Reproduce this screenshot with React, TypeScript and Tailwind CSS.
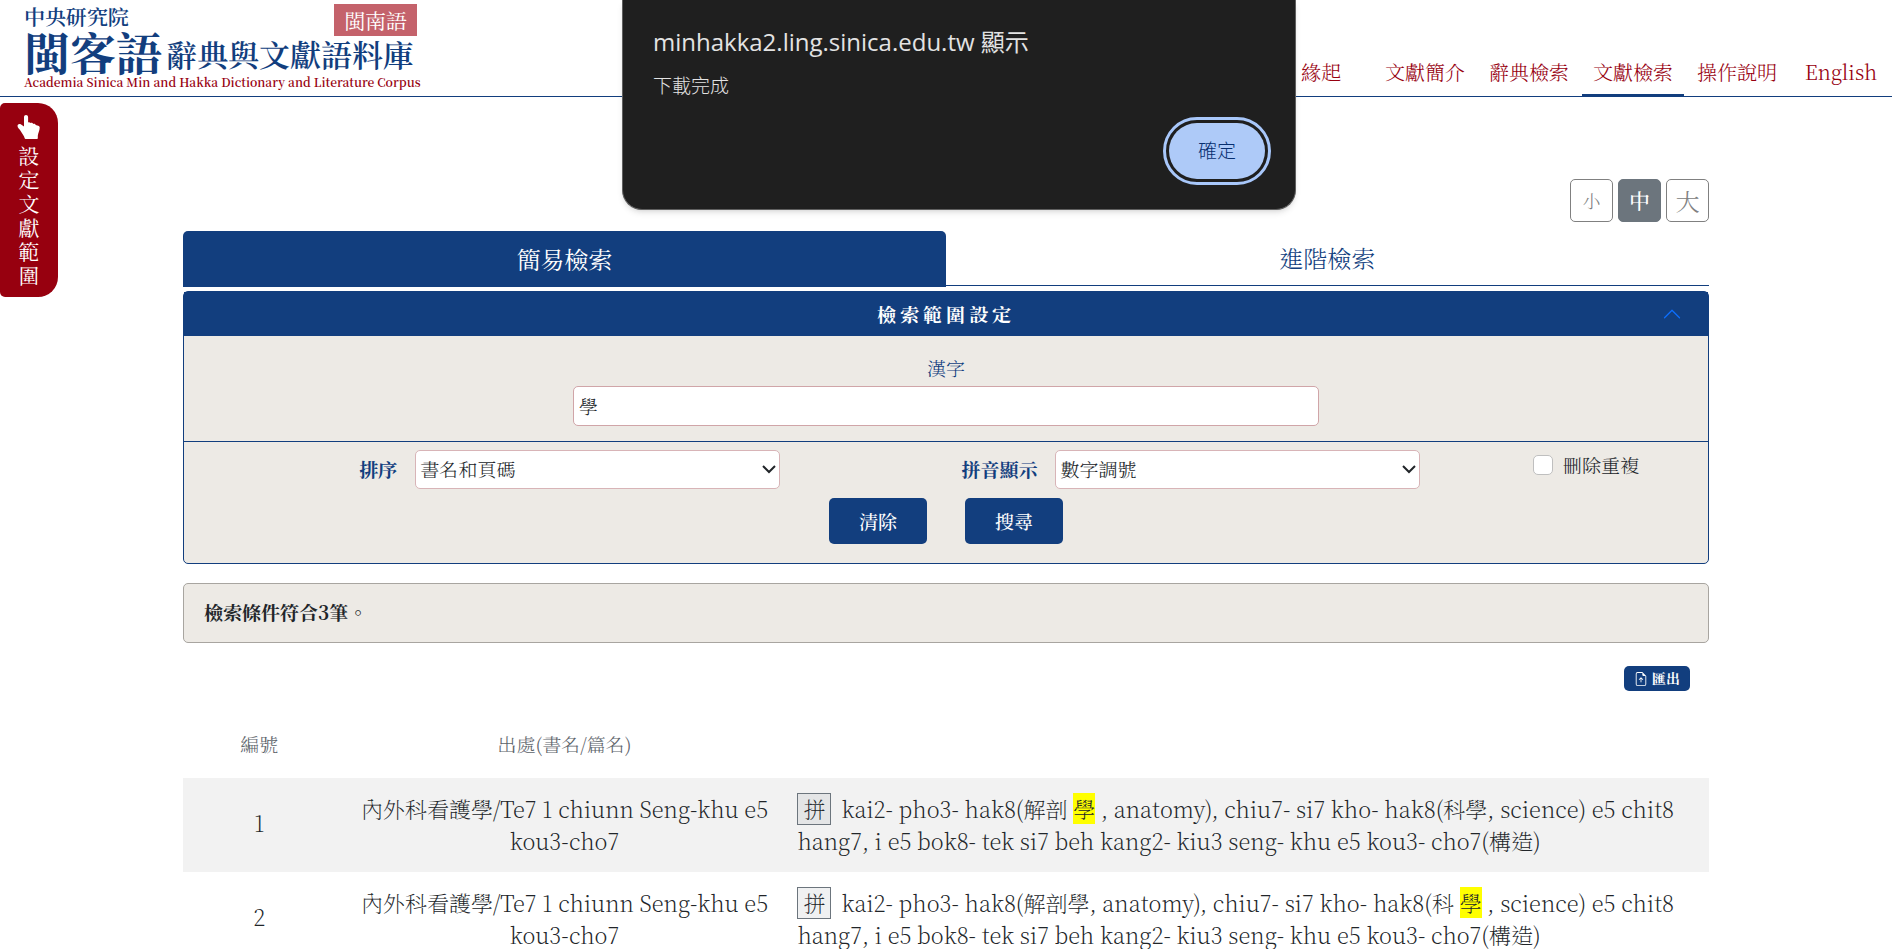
import type { ReactNode } from 'react';

type NavItem = { label: string; active?: boolean };
type Result = { id: number; source: string; text: ReactNode };

const NAV: NavItem[] = [
  { label: '緣起' },
  { label: '文獻簡介' },
  { label: '辭典檢索' },
  { label: '文獻檢索', active: true },
  { label: '操作說明' },
  { label: 'English' },
];

const SOURCE = '內外科看護學/Te7 1 chiunn Seng-khu e5 kou3-cho7';

const Hit = <mark className="bg-[#ffff00] text-inherit">學</mark>;

const RESULTS: Result[] = [
  {
    id: 1,
    source: SOURCE,
    text: (
      <>
        kai2- pho3- hak8(解剖 {Hit} , anatomy), chiu7- si7 kho- hak8(科學, science) e5 chit8 hang7, i e5
        bok8- tek si7 beh kang2- kiu3 seng- khu e5 kou3- cho7(構造)
      </>
    ),
  },
  {
    id: 2,
    source: SOURCE,
    text: (
      <>
        kai2- pho3- hak8(解剖學, anatomy), chiu7- si7 kho- hak8(科 {Hit} , science) e5 chit8 hang7, i e5
        bok8- tek si7 beh kang2- kiu3 seng- khu e5 kou3- cho7(構造)
      </>
    ),
  },
];

const HandIcon = (
  <svg width="24" height="24" viewBox="0 0 24 24" fill="currentColor" aria-hidden="true">
    <path d="M7 2.2C7 .9 7.900 0 9 0s2.100.9 2.100 2.200v5.300c.5-.4 1.900-.4 2.400.6.8-.5 2.300-.2 2.700.9 1-.4 2.300.1 2.500 1.100l2.500.6c1 .3 1.500.9 1.500 1.900 0 3.400-1.600 5.200-1.900 8.200V23c0 .6-.4 1-1 1H8.700c-.6 0-1-.4-1.100-1-.2-1.800-2.600-4.400-4.100-7.200C2.600 14 .5 12.500.5 10.900c0-1.700 1.800-2.600 3.200-1.600L7 11.400z" />
  </svg>
);

const ChevronUp = (
  <svg width="20" height="20" viewBox="0 0 16 16" fill="#0d6efd" aria-hidden="true">
    <path
      fillRule="evenodd"
      d="M7.646 4.646a.5.5 0 0 1 .708 0l6 6a.5.5 0 0 1-.708.708L8 5.707l-5.646 5.647a.5.5 0 0 1-.708-.708l6-6z"
    />
  </svg>
);

const ChevronDown = (
  <svg
    className="pointer-events-none absolute right-1 top-3"
    width="14"
    height="14"
    viewBox="0 0 14 14"
    fill="none"
    stroke="#212529"
    strokeWidth="2"
    aria-hidden="true"
  >
    <polyline points="1 4 7 10 13 4" />
  </svg>
);

const ExportIcon = (
  <svg width="14" height="14" viewBox="0 0 16 16" fill="currentColor" aria-hidden="true">
    <path d="M8.500 11.500a.5.500 0 0 1-1 0V7.707L6.354 8.854a.5.500 0 1 1-.708-.708l2-2a.5.500 0 0 1 .708 0l2 2a.5.500 0 0 1-.708.708L8.500 7.707V11.500z" />
    <path d="M14 14V4.500L9.500 0H4a2 2 0 0 0-2 2v12a2 2 0 0 0 2 2h8a2 2 0 0 0 2-2zM9.500 3A1.500 1.500 0 0 0 11 4.500h2V14a1 1 0 0 1-1 1H4a1 1 0 0 1-1-1V2a1 1 0 0 1 1-1h5.500v2z" />
  </svg>
);

function Header() {
  return (
    <header className="flex h-[97px] items-end justify-between border-b border-[#123e7e]">
      <a href="#home" className="relative flex h-full flex-col pl-6 text-[#123e7e]">
        <span className="mt-1 text-[21px] font-semibold leading-6">中央研究院</span>
        <span className="flex items-end whitespace-nowrap">
          <span className="text-[46px] font-bold leading-[46px]">閩客語</span>
          <span className="ml-1 text-[31px] font-semibold leading-10">辭典與文獻語料庫</span>
        </span>
        <span className="whitespace-nowrap text-[12px] font-semibold leading-4 text-[#97000f]">
          Academia Sinica Min and Hakka Dictionary and Literature Corpus
        </span>
        <span className="absolute left-[334px] top-1 whitespace-nowrap bg-[#c4626b] px-2.5 text-[21px] font-normal leading-8 text-white">
          閩南語
        </span>
      </a>
      <nav className="flex gap-0.5">
        {NAV.map((item) => (
          <a
            key={item.label}
            href="#nav"
            className={
              item.active
                ? 'w-[102px] border-b-2 border-[#123e7e] pb-1.5 text-center text-[20px] leading-8 text-[#97000f]'
                : 'w-[102px] border-b-2 border-transparent pb-1.5 text-center text-[20px] leading-8 text-[#97000f]'
            }
          >
            {item.label}
          </a>
        ))}
      </nav>
    </header>
  );
}

function AlertDialog() {
  return (
    <div
      role="alertdialog"
      aria-labelledby="alert-title"
      className="absolute left-1/2 top-0 flex w-[674px] -translate-x-[324px] flex-col rounded-b-[20px] border border-t-0 border-[#5f5f5f] bg-[#1f1f1f] px-[30px] pb-[30px] pt-6 font-['Open_Sans','Noto_Sans_CJK_TC',sans-serif] text-[#e3e3e3] shadow-md"
    >
      <h2 id="alert-title" className="text-[24px] font-normal leading-9">
        minhakka2.ling.sinica.edu.tw 顯示
      </h2>
      <p className="mt-3 text-[19px] leading-7">下載完成</p>
      <button
        type="button"
        className="mt-[23px] h-14 self-end rounded-[28px] bg-[#aecaf8] px-[29px] text-[19px] text-[#062e6f] outline-3 outline-offset-3 outline-[#a8c7fa]"
      >
        確定
      </button>
    </div>
  );
}

function SearchPanel() {
  return (
    <section className="mt-1 rounded-[5px] border border-[#123e7e] bg-[#edeae5] text-[19px] text-[#123e7e]">
      <button
        type="button"
        className="relative flex h-11 w-full items-center justify-center bg-[#123e7e] font-bold tracking-[4px] text-white"
      >
        檢索範圍設定
        <span className="absolute right-[26px]">{ChevronUp}</span>
      </button>
      <div className="flex flex-col items-center border-b border-[#123e7e] pb-[15px] pt-[18px]">
        <label htmlFor="hanzi" className="leading-7">
          漢字
        </label>
        <input
          id="hanzi"
          type="text"
          defaultValue="學"
          className="mt-1 h-10 w-[49%] rounded-[5px] border border-[#d0a5a8] bg-white px-[5px] pb-0.5 text-[#212529]"
        />
      </div>
      <div className="grid grid-cols-[42%_42%_16%] pt-2">
        <div className="flex items-center gap-[18px]">
          <label htmlFor="sort" className="w-1/3 text-right font-bold">
            排序
          </label>
          <div className="relative w-[57%]">
            <select
              id="sort"
              className="h-[39px] w-full appearance-none rounded-[5px] border border-[#d8b4b7] bg-white px-1 text-[#212529]"
            >
              <option>書名和頁碼</option>
            </select>
            {ChevronDown}
          </div>
        </div>
        <div className="flex items-center gap-[18px]">
          <label htmlFor="tone" className="w-1/3 text-right font-bold">
            拼音顯示
          </label>
          <div className="relative w-[57%]">
            <select
              id="tone"
              className="h-[39px] w-full appearance-none rounded-[5px] border border-[#d8b4b7] bg-white px-1 text-[#212529]"
            >
              <option>數字調號</option>
            </select>
            {ChevronDown}
          </div>
        </div>
        <div className="flex h-[30px] items-center justify-center gap-2.5">
          <input
            id="dedupe"
            type="checkbox"
            className="size-5 appearance-none rounded-[5px] border border-[#bfbfbf] bg-white"
          />
          <label htmlFor="dedupe" className="text-[#212529]">
            刪除重複
          </label>
        </div>
      </div>
      <div className="flex justify-center gap-[38px] pb-[19px] pt-[9px] font-medium text-white">
        <button type="button" className="h-[46px] w-[98px] rounded-[5px] bg-[#123e7e]">
          清除
        </button>
        <button type="button" className="h-[46px] w-[98px] rounded-[5px] bg-[#123e7e]">
          搜尋
        </button>
      </div>
    </section>
  );
}

function ResultsTable() {
  return (
    <table className="mt-8 w-full table-fixed text-[#212529]">
      <colgroup>
        <col className="w-[10%]" />
        <col className="w-[30%]" />
        <col className="w-[60%]" />
      </colgroup>
      <thead className="text-[19px] text-[#5c636a]">
        <tr className="h-[55px]">
          <th className="pb-3 font-light">編號</th>
          <th className="pb-3 font-light">出處(書名/篇名)</th>
          <td />
        </tr>
      </thead>
      <tbody className="text-[22px] font-extralight leading-8">
        {RESULTS.map((row) => (
          <tr key={row.id} className="odd:bg-[#f2f2f2]">
            <td className="pb-1 text-center">{row.id}</td>
            <td className="px-4 py-[15px] text-center">{row.source}</td>
            <td className="py-[15px] pl-1 pr-4">
              <button
                type="button"
                className="mr-2.5 border border-[#6c757d] bg-[#6c757d]/10 px-[5px] leading-[30px]"
              >
                拼
              </button>
              {row.text}
            </td>
          </tr>
        ))}
      </tbody>
    </table>
  );
}

export default function App() {
  return (
    <div
      lang="zh-Hant"
      className="relative min-h-screen bg-white font-['Noto_Serif_TC','Noto_Serif_CJK_TC','Liberation_Serif','Noto_Sans_CJK_TC',serif] font-light"
    >
      <Header />

      <button
        type="button"
        className="absolute left-0 top-[103px] flex w-[58px] flex-col items-center rounded-l-[5px] rounded-r-[20px] bg-[#97000f] pb-2.5 pt-3 text-[21px] font-normal text-white"
      >
        {HandIcon}
        <span className="mt-1 w-[21px] break-all leading-6">設定文獻範圍</span>
      </button>

      <main className="mx-auto mt-[82px] w-[81%] max-w-[1526px]">
        <div className="flex justify-end gap-[5px] text-[#808080]">
          <button type="button" className="size-[43px] rounded-[5px] border border-[#808080] text-[18px]">
            小
          </button>
          <button
            type="button"
            className="size-[43px] rounded-[5px] border border-[#6c757d] bg-[#6c757d] text-[21px] font-medium text-white"
          >
            中
          </button>
          <button type="button" className="size-[43px] rounded-[5px] border border-[#808080] text-[24px]">
            大
          </button>
        </div>

        <div className="mt-[9px] grid grid-cols-2 text-[24px]" role="tablist">
          <button
            type="button"
            role="tab"
            aria-selected="true"
            className="h-14 rounded-t-[5px] bg-[#123e7e] font-normal text-white"
          >
            簡易檢索
          </button>
          <button
            type="button"
            role="tab"
            aria-selected="false"
            className="h-[55px] border-b border-[#123e7e] text-[#123e7e]"
          >
            進階檢索
          </button>
        </div>

        <SearchPanel />

        <p className="mt-[19px] rounded-[5px] border border-[#a8a5a0] bg-[#edeae5] px-5 pb-[17px] pt-[15px] text-[19px] font-bold leading-[26px] text-[#212529]">
          檢索條件符合3筆。
        </p>

        <div className="mt-[23px] flex justify-end pr-[19px]">
          <button
            type="button"
            className="flex h-[25px] items-center gap-1 rounded-[5px] bg-[#123e7e] px-2.5 text-[14px] font-bold text-white"
          >
            {ExportIcon}
            匯出
          </button>
        </div>

        <ResultsTable />
      </main>

      <AlertDialog />
    </div>
  );
}
